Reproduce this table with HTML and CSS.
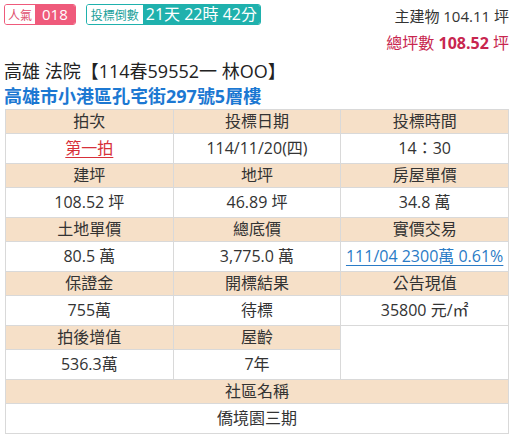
FILE: index.html
```html
<!DOCTYPE html>
<html lang="zh-Hant">
<head>
<meta charset="utf-8">
<link rel="stylesheet" href="styles.css">
</head>
<body>
<div class="top">
  <div class="badges">
    <div class="badge pink">
      <span class="b-label">人氣</span><span class="b-val">018</span>
    </div>
    <div class="badge teal">
      <span class="b-label">投標倒數</span><span class="b-val big">21天 22時 42分</span>
    </div>
  </div>
  <div class="area">
    <div class="line">主建物 104.11 坪</div>
    <div class="line total">總坪數 <b>108.52</b> 坪</div>
  </div>
</div>
<div class="title">高雄 法院【114春59552一 林OO】</div>
<div class="addr">高雄市小港區孔宅街297號5層樓</div>
<table class="info">
  <tr class="h"><td>拍次</td><td>投標日期</td><td>投標時間</td></tr>
  <tr class="d"><td><a class="red">第一拍</a></td><td>114/11/20(四)</td><td>14：30</td></tr>
  <tr class="h"><td>建坪</td><td>地坪</td><td>房屋單價</td></tr>
  <tr class="d"><td>108.52 坪</td><td>46.89 坪</td><td>34.8 萬</td></tr>
  <tr class="h"><td>土地單價</td><td>總底價</td><td>實價交易</td></tr>
  <tr class="d"><td>80.5 萬</td><td>3,775.0 萬</td><td><a class="blue">111/04 2300萬 0.61%</a></td></tr>
  <tr class="h"><td>保證金</td><td>開標結果</td><td>公告現值</td></tr>
  <tr class="d"><td>755萬</td><td>待標</td><td>35800 元/㎡</td></tr>
  <tr class="h"><td>拍後增值</td><td>屋齡</td><td class="blank" rowspan="2"></td></tr>
  <tr class="d"><td>536.3萬</td><td>7年</td></tr>
  <tr class="h"><td colspan="3">社區名稱</td></tr>
  <tr class="d last"><td colspan="3">僑境園三期</td></tr>
</table>
</body>
</html>
```

FILE: styles.css
```css
html, body {
  margin: 0;
  padding: 0;
  background: #fff;
}
body {
  padding: 0 5px 0 5px;
  font-family: "Open Sans", "Noto Sans CJK TC", sans-serif;
  color: #333;
}
.top {
  display: flex;
  justify-content: space-between;
  align-items: flex-start;
  height: 59px;
  padding-top: 3px;
  box-sizing: border-box;
}
.badges {
  display: flex;
  gap: 10px;
  margin-left: -1px;
  margin-top: 1px;
}
.badge {
  display: flex;
  height: 21px;
  border-radius: 3px;
  overflow: hidden;
  box-sizing: border-box;
  font-size: 12px;
  line-height: 19px;
}
.badge .b-label {
  background: #fff;
  padding: 0 3px;
  font-family: "Noto Sans CJK TC", sans-serif;
}
.badge .b-val {
  color: #fff;
  padding: 0 7px;
  font-size: 15px;
}
.badge .b-val.big {
  font-size: 16px;
  padding: 0 3px;
}
.pink {
  border: 1px solid #ef5a7b;
}
.pink .b-label { color: #e0506f; }
.pink .b-val { background: #ef5a7b; }
.teal {
  border: 1px solid #1fb1ad;
}
.teal .b-label { color: #1a9f9b; padding: 0 4px; }
.teal .b-val { background: #1fb1ad; }
.area {
  text-align: right;
  font-size: 15px;
}
.area .line {
  line-height: 27px;
}
.area .total {
  color: #c8264f;
  font-size: 16px;
}
.area .total b {
  font-weight: bold;
}
.title {
  font-size: 18px;
  line-height: 25px;
  color: #222;
  margin-left: -1px;
}
.addr {
  font-size: 18px;
  line-height: 25px;
  color: #1c78d2;
  font-weight: bold;
  margin-left: -1px;
}
.info {
  width: 504px;
  table-layout: fixed;
  border-collapse: collapse;
  border: 1px solid #a9a9a9;
  font-size: 16px;
}
.info td {
  border: 1px solid #d9d9d9;
  text-align: center;
  padding: 0;
  color: #333;
}
.info tr.h td {
  background: #f6e0c8;
  height: 23px;
  font-size: 16px;
  line-height: 23px;
}
.info tr.d td {
  background: #fff;
  height: 29px;
  line-height: 29px;
}
.info td.blank {
  background: #fff !important;
}
.info a {
  text-decoration: underline;
  text-underline-offset: 3px;
}
.info a.red {
  color: #d7303a;
}
.info a.blue {
  color: #2a7bc6;
}
```
